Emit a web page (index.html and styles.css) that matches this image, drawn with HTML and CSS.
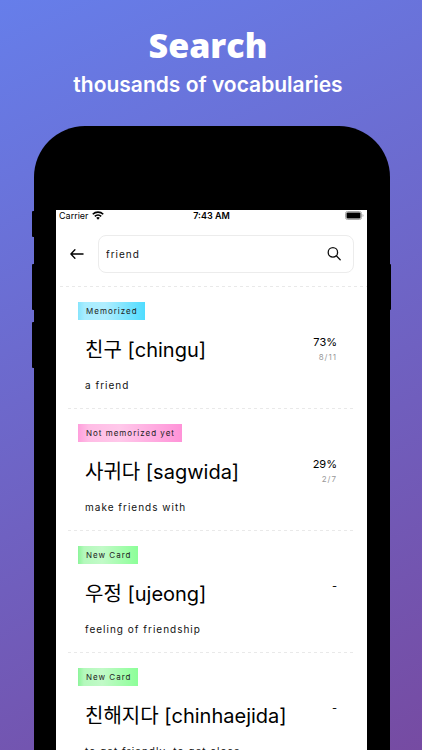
FILE: index.html
```html
<!DOCTYPE html>
<html lang="en">
<head>
<meta charset="utf-8">
<meta name="viewport" content="width=device-width, initial-scale=1">
<title>Search</title>
<link rel="stylesheet" href="styles.css">
</head>
<body>
<header class="hero">
  <h1 class="hero-title">Search</h1>
  <p class="hero-subtitle">thousands of vocabularies</p>
</header>
<main class="phone">
  <span class="side-key mute"></span>
  <span class="side-key volume-up"></span>
  <span class="side-key volume-down"></span>
  <span class="side-key power"></span>
  <div class="screen">
    <div class="status">
      <span class="carrier">Carrier
        <svg class="wifi" viewBox="0 0 24 18" aria-hidden="true"><g fill="none" stroke="#000" stroke-width="3.2"><path d="M1.5 6.5a15 15 0 0 1 21 0"/><path d="M5.6 10.8a9.2 9.2 0 0 1 12.8 0"/></g><path d="M12 17.5l-3.6-3.8a5.1 5.1 0 0 1 7.2 0z"/></svg>
      </span>
      <span class="clock">7:43 AM</span>
      <svg class="battery" viewBox="0 0 19 10" aria-hidden="true"><rect x=".5" y=".5" width="16" height="8" rx="2" fill="#fff" stroke="#aaa"/><rect x="1.5" y="1.5" width="14" height="6" rx="1"/><path d="M17.5 3v3q1-.4 1-1.5t-1-1.5z" fill="#aaa"/></svg>
    </div>
    <form class="search">
      <button class="icon-button" type="button" aria-label="Back">
        <svg class="arrow" viewBox="0 0 16 12" aria-hidden="true"><path d="M15 6H2M6.300 1.500L2 6L6.300 10.500" fill="none" stroke="#000" stroke-width="1.400" stroke-linecap="round" stroke-linejoin="round"/></svg>
      </button>
      <div class="search-box">
        <input class="search-input" type="text" value="friend" aria-label="Search vocabulary">
        <button class="icon-button" type="submit" aria-label="Search">
          <svg class="magnifier" viewBox="0 0 14 14" aria-hidden="true"><g fill="none" stroke="#111" stroke-width="1.300" stroke-linecap="round"><circle cx="5.900" cy="5.400" r="4.700"/><path d="M9.300 8.800l3.900 3.900"/></g></svg>
        </button>
      </div>
    </form>
    <div class="dashes"></div>
    <ul class="cards">
      <li class="card">
        <span class="tag memorized">Memorized</span>
        <div class="row"><h2 class="word">친구 [chingu]</h2><div class="score"><span class="percent">73%</span><span class="count">8/11</span></div></div>
        <p class="meaning">a friend</p>
        <div class="dashes"></div>
      </li>
      <li class="card">
        <span class="tag learning">Not memorized yet</span>
        <div class="row"><h2 class="word">사귀다 [sagwida]</h2><div class="score"><span class="percent">29%</span><span class="count">2/7</span></div></div>
        <p class="meaning">make friends with</p>
        <div class="dashes"></div>
      </li>
      <li class="card">
        <span class="tag new">New Card</span>
        <div class="row"><h2 class="word">우정 [ujeong]</h2><div class="score"><span class="percent">-</span></div></div>
        <p class="meaning">feeling of friendship</p>
        <div class="dashes"></div>
      </li>
      <li class="card">
        <span class="tag new">New Card</span>
        <div class="row"><h2 class="word">친해지다 [chinhaejida]</h2><div class="score"><span class="percent">-</span></div></div>
        <p class="meaning">to get friendly, to get close</p>
        <div class="dashes"></div>
      </li>
    </ul>
  </div>
</main>
</body>
</html>
```
FILE: styles.css
```css
* { box-sizing: border-box; }

body {
  margin: 0;
  height: 100vh;
  overflow: hidden;
  display: flex;
  flex-direction: column;
  background: linear-gradient(155deg, #667eea, #764ba2);
  color: #000;
  font-family: Inter, "Noto Sans CJK KR", sans-serif;
}

h1, h2, p, ul { margin: 0; padding: 0; }

.hero {
  flex: none;
  height: 126px;
  padding: 24px 6px 0 0;
  text-align: center;
  color: #fff;
}

.hero-title {
  font-family: "Open Sans", sans-serif;
  font-size: 34px;
  line-height: 42px;
  font-weight: 800;
}

.hero-subtitle {
  font-size: 21px;
  line-height: 38px;
  font-weight: 600;
}

.phone {
  position: relative;
  flex: 1;
  min-height: 0;
  display: flex;
  margin: 0 32px 0 34px;
  padding: 84px 23px 0 22px;
  border-radius: 51px 51px 0 0;
  background: #000;
}

.side-key {
  position: absolute;
  left: -2px;
  width: 4px;
  height: 46px;
  border-radius: 1px;
  background: #000;
}

.mute { top: 85px; height: 26px; }
.volume-up { top: 138px; }
.volume-down { top: 196px; }
.power { top: 138px; left: auto; right: -1px; }

.screen {
  flex: 1;
  min-width: 0;
  overflow: hidden;
  background: #fff;
}

.status {
  display: grid;
  grid-template-columns: 1fr auto 1fr;
  align-items: center;
  height: 11px;
  padding: 0 3px;
  font-size: 9px;
  line-height: 11px;
}

.carrier { display: flex; align-items: center; gap: 3px; }
.wifi { width: 12px; height: 9px; }
.clock { font-weight: 600; }
.battery { width: 19px; height: 10px; justify-self: end; }

.search {
  display: flex;
  align-items: center;
  gap: 14px;
  padding: 14px 13px 13px;
}

.search-box {
  flex: 1;
  min-width: 0;
  display: flex;
  align-items: center;
  height: 38px;
  padding: 0 12px 0 7px;
  border: 1px solid #ececec;
  border-radius: 8px;
}

.search-input {
  flex: 1;
  min-width: 0;
  padding: 0;
  border: 0;
  outline: 0;
  background: none;
  color: #111;
  font: 10px/16px Inter, sans-serif;
  letter-spacing: 1px;
}

.icon-button {
  display: flex;
  padding: 0;
  border: 0;
  background: none;
}

.arrow { width: 15px; height: 12px; }
.magnifier { width: 14px; height: 14px; }

.dashes {
  height: 1px;
  background: repeating-linear-gradient(90deg, #e9e9e9 0 3px, transparent 3px 6px);
}

.screen > .dashes { margin: 0 0 0 4px; }

.cards { list-style: none; padding: 0 12px; }

.card {
  display: flex;
  flex-direction: column;
  align-items: flex-start;
  height: 122px;
  padding-top: 15px;
  letter-spacing: 1px;
}

.card > .dashes { width: 100%; margin-top: auto; }

.tag {
  margin-left: 10px;
  padding: 0 7px 0 8px;
  font-size: 8px;
  line-height: 18px;
  color: #222;
}

.memorized { background: linear-gradient(90deg, #86e4fc, #a8edff 10%, #b0eeff 40%, #4fdcff); }
.learning { background: linear-gradient(90deg, #ff9fdc, #ffbce5 10%, #ffc8ea 40%, #ff93d8); }
.new { background: linear-gradient(90deg, #8cf49a, #b4f9bc 10%, #c2fac8 40%, #8cff98); }

.row {
  display: flex;
  justify-content: space-between;
  width: 100%;
  margin-top: 15px;
  padding: 0 18px 0 17px;
}

.word {
  font-size: 20px;
  line-height: 30px;
  font-weight: 400;
  letter-spacing: 0;
}

.score { display: flex; flex-direction: column; align-items: flex-end; }
.percent { font-size: 11px; line-height: 14px; letter-spacing: 0; }
.count { font-size: 8px; line-height: 16px; color: #999; }

.meaning {
  margin: 12px 0 0 17px;
  font-size: 10px;
  line-height: 16px;
  color: #111;
}
```
